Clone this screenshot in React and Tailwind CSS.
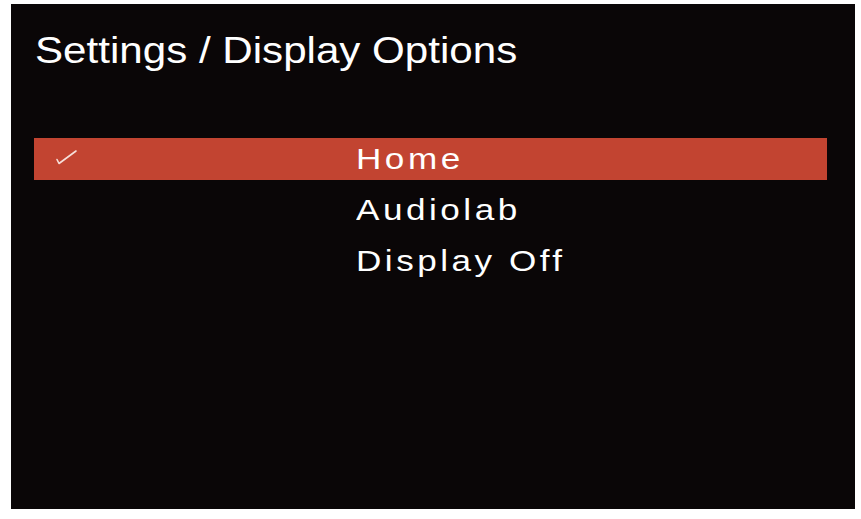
export default function App() {
  const items = [
    { label: "Home", selected: true },
    { label: "Audiolab", selected: false },
    { label: "Display Off", selected: false },
  ];
  return (
    <div className="w-[861px] h-[519px] bg-white pt-[4px] pl-[11px]" style={{ fontFamily: '"Liberation Sans", Arial, sans-serif' }}>
      <div className="w-[844px] h-[505px] bg-[#0a0607] text-white flex flex-col">
        <div className="pl-[24px] pt-[27px] h-[134px]">
          <span className="inline-block origin-left scale-x-[1.17] text-[36px] leading-[40px] whitespace-nowrap">Settings / Display Options</span>
        </div>
        <div className="flex flex-col">
          {items.map((it) => (
            <div key={it.label} className="relative ml-[23px] w-[793px] h-[51px] flex items-start">
              {it.selected && (
                <div className="absolute left-0 top-0 w-[793px] h-[42px] bg-[#c24431]" />
              )}
              {it.selected && (
                <svg className="absolute left-[21px] top-[11px]" width="23" height="16" viewBox="0 0 23 16">
                  <path d="M2 10.5 L4 14.5 L21 2" fill="none" stroke="#f6e0da" strokeWidth="1.6" strokeLinecap="round" strokeLinejoin="round" />
                </svg>
              )}
              <span className="relative inline-block origin-left scale-x-[1.17] ml-[322px] mt-[3px] text-[30px] leading-[36px] tracking-[3px] whitespace-nowrap">{it.label}</span>
            </div>
          ))}
        </div>
      </div>
    </div>
  );
}
